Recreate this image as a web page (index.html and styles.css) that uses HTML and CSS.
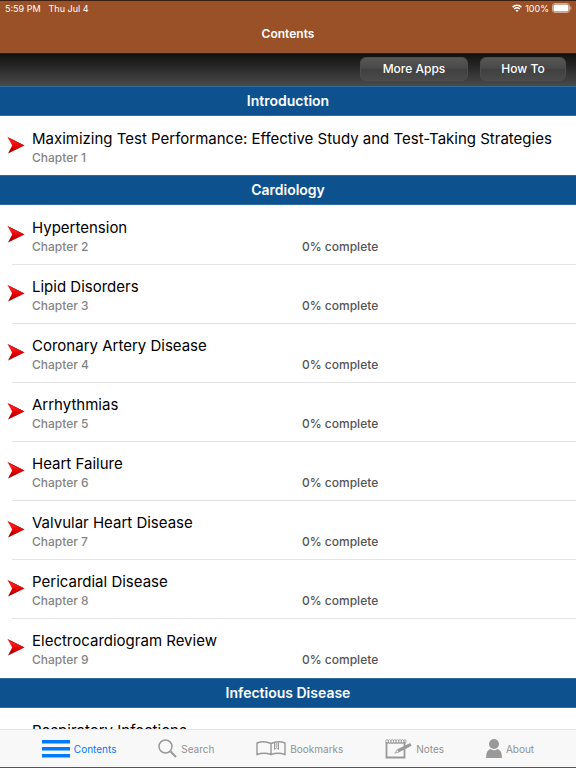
FILE: index.html
```html
<!DOCTYPE html>
<html lang="en">
<head>
  <meta charset="UTF-8" />
  <meta name="viewport" content="width=device-width, initial-scale=1.0" />
  <title>Contents</title>
  <link rel="stylesheet" href="styles.css">
</head>
<body>
  <svg class="sprite" aria-hidden="true">
    <defs>
      <linearGradient id="red" x1="0" y1="0" x2="0" y2="1">
        <stop offset="0.3" stop-color="#ff1a1a" />
        <stop offset="0.55" stop-color="#e60000" />
        <stop offset="1" stop-color="#8c0000" />
      </linearGradient>
      <symbol id="arrow" viewBox="0 0 18 18">
        <path d="M.5 1 17.500 9.500 1 17.500 5.200 9.500Z" fill="url(#red)" />
        <path d="M.5 1 17.500 9.500H16L3 3Z" fill="#a01818" />
      </symbol>
    </defs>
  </svg>

  <header>
    <div class="status">
      <span>5:59 PM</span>
      <span>Thu Jul 4</span>
      <span class="right">
        <svg width="10" height="8" viewBox="0 0 10 8" fill="none" stroke="#fff" stroke-width="1.5">
          <path d="M.6 3.1a6.2 6.2 0 0 1 8.8 0M2.3 5a3.8 3.8 0 0 1 5.4 0" />
          <path d="M5 8 3.5 6.4a2.1 2.1 0 0 1 3 0Z" fill="#fff" stroke="none" />
        </svg>
        <span>100%</span>
        <svg width="20" height="10" viewBox="0 0 20 10">
          <rect x=".5" y=".5" width="17" height="9" rx="2.5" fill="none" stroke="#cfa894" />
          <rect x="1.5" y="1.5" width="15" height="7" rx="1.5" fill="#fff" />
          <path d="M18.7 3.5q1 1.500 0 3Z" fill="#cfa894" stroke="#cfa894" stroke-width=".6" />
        </svg>
      </span>
    </div>
    <h1>Contents</h1>
  </header>

  <div class="toolbar">
    <button class="more">More Apps</button>
    <button class="how">How To</button>
  </div>

  <main>
    <h2>Introduction</h2>
    <ul>
      <li><svg class="arrow"><use href="#arrow" /></svg><h3>Maximizing Test Performance: Effective Study and Test-Taking Strategies</h3><p>Chapter 1</p></li>
    </ul>

    <h2>Cardiology</h2>
    <ul class="long">
      <li><svg class="arrow"><use href="#arrow" /></svg><h3>Hypertension</h3><p>Chapter 2</p><p class="done">0% complete</p></li>
      <li><svg class="arrow"><use href="#arrow" /></svg><h3>Lipid Disorders</h3><p>Chapter 3</p><p class="done">0% complete</p></li>
      <li><svg class="arrow"><use href="#arrow" /></svg><h3>Coronary Artery Disease</h3><p>Chapter 4</p><p class="done">0% complete</p></li>
      <li><svg class="arrow"><use href="#arrow" /></svg><h3>Arrhythmias</h3><p>Chapter 5</p><p class="done">0% complete</p></li>
      <li><svg class="arrow"><use href="#arrow" /></svg><h3>Heart Failure</h3><p>Chapter 6</p><p class="done">0% complete</p></li>
      <li><svg class="arrow"><use href="#arrow" /></svg><h3>Valvular Heart Disease</h3><p>Chapter 7</p><p class="done">0% complete</p></li>
      <li><svg class="arrow"><use href="#arrow" /></svg><h3>Pericardial Disease</h3><p>Chapter 8</p><p class="done">0% complete</p></li>
      <li><svg class="arrow"><use href="#arrow" /></svg><h3>Electrocardiogram Review</h3><p>Chapter 9</p><p class="done">0% complete</p></li>
    </ul>

    <h2>Infectious Disease</h2>
    <ul>
      <li><svg class="arrow"><use href="#arrow" /></svg><h3>Respiratory Infections</h3></li>
    </ul>
  </main>

  <nav>
    <a href="#" class="active">
      <svg width="28" height="18" viewBox="0 0 28 18" fill="#007aff">
        <path d="M0 0h28v3.500H0zM0 7h28v3.500H0zM0 14h28v3.500H0z" />
      </svg>
      Contents
    </a>
    <a href="#">
      <svg width="19" height="19" viewBox="0 0 19 19" fill="none" stroke="#999">
        <circle cx="7.500" cy="7.500" r="6.500" stroke-width="1.500" />
        <path d="M12.300 12.300 18 18" stroke-width="2" />
      </svg>
      Search
    </a>
    <a href="#">
      <svg width="30" height="15" viewBox="0 0 30 15" fill="none" stroke="#999" stroke-width="1.400">
        <path d="M15 2.500Q8 -.8 1 2V13.500Q8 11 15 13.500Q22 11 29 13.500V2Q22 -.8 15 2.500V13.500" />
        <path d="M18.500 1.500V8.500L20.500 6.800 22.500 8.500V1.500" stroke-width="1" />
        <path d="M19.500 1.500h2V6.500L20.500 6 19.500 6.500Z" fill="#bbb" stroke="none" />
      </svg>
      Bookmarks
    </a>
    <a href="#">
      <svg width="27" height="20" viewBox="0 0 27 20" fill="none" stroke="#999">
        <path d="M1.500 3V18.500H19.500V3" stroke-width="1.800" />
        <path d="M1 4h19" stroke-width="1" />
        <g stroke-width=".8">
          <ellipse cx="2" cy="2.500" rx="1.300" ry="2" /><ellipse cx="4.600" cy="2.500" rx="1.300" ry="2" />
          <ellipse cx="7.200" cy="2.500" rx="1.300" ry="2" /><ellipse cx="9.800" cy="2.500" rx="1.300" ry="2" />
          <ellipse cx="12.400" cy="2.500" rx="1.300" ry="2" /><ellipse cx="15" cy="2.500" rx="1.300" ry="2" />
          <ellipse cx="17.600" cy="2.500" rx="1.300" ry="2" /><ellipse cx="20" cy="2.500" rx="1" ry="2" />
        </g>
        <path d="M12.300 10.300 25.200 4 26.600 6.800 14 13.200Z" fill="#999" stroke="none" />
        <path d="M12.300 10.500 9.800 14.200 14 13Z" stroke-width=".8" />
      </svg>
      Notes
    </a>
    <a href="#">
      <svg width="16" height="19" viewBox="0 0 16 19" fill="#999">
        <circle cx="8" cy="5" r="5" />
        <path d="M0 19Q0 11 4.500 10Q8 12.500 11.500 10Q16 11 16 19Z" />
      </svg>
      About
    </a>
  </nav>
</body>
</html>
```

FILE: styles.css
```css
* {
  box-sizing: border-box;
  margin: 0;
  padding: 0;
}
body {
  display: flex;
  flex-direction: column;
  height: 100vh;
  font-family: Inter, "Liberation Sans", sans-serif;
  color: #000;
  background: #fff;
  border-bottom: 1px solid #555;
}
svg {
  flex: none;
}
.sprite {
  width: 0;
  height: 0;
  position: absolute;
}
header {
  color: #fff;
  background: #9b5128;
  border-top: 1px solid #3c1e10;
  border-bottom: 1px solid #2b1a10;
  padding-bottom: 10px;
}
.status {
  display: flex;
  align-items: center;
  gap: 8px;
  height: 14px;
  padding: 0 4px 0 5px;
  font-size: 9px;
}
.right {
  display: flex;
  align-items: center;
  gap: 3px;
  margin-left: auto;
}
h1 {
  margin-top: 10px;
  font-size: 12px;
  line-height: 18px;
  font-weight: 600;
  text-align: center;
}
.toolbar {
  display: flex;
  justify-content: flex-end;
  gap: 12px;
  padding: 3px 10px 5px;
  background: linear-gradient(#111, #4a4a4a);
}
button {
  height: 24px;
  border: 1px solid #4d4d4d;
  border-radius: 6px;
  background: linear-gradient(#575757, #484848 50%, #404040 50%, #4a4a4a);
  color: #fff;
  font: 500 12px/22px Inter, "Liberation Sans", sans-serif;
}
.more {
  width: 108px;
}
.how {
  width: 86px;
}
main {
  flex: 1;
  min-height: 0;
  overflow-y: auto;
  scrollbar-width: none;
}
h2 {
  height: 30px;
  background: #0d528e;
  border-top: 1px solid #2f6ca0;
  border-bottom: 1px solid #2f6ca0;
  color: #fff;
  font-size: 14px;
  line-height: 28px;
  font-weight: 600;
  text-align: center;
}
ul {
  list-style: none;
}
.long {
  padding-bottom: 1px;
}
li {
  display: grid;
  grid-template-columns: 25px 270px 1fr;
  grid-template-rows: 22px 16px;
  align-content: start;
  height: 59px;
  padding: 12px 0 0 7px;
}
li + li {
  background: linear-gradient(#e4e4e6, #e4e4e6) 12px 0 / 100% 1px no-repeat;
}
.arrow {
  grid-row: 1 / 3;
  width: 18px;
  height: 18px;
  margin-top: 8px;
}
h3 {
  grid-column: 2 / 4;
  font-size: 15px;
  line-height: 22px;
  font-weight: 400;
  white-space: nowrap;
}
p {
  color: #858585;
  font-size: 12px;
  line-height: 16px;
  font-weight: 500;
}
.done {
  color: #555;
}
nav {
  display: flex;
  justify-content: space-evenly;
  height: 38px;
  background: #f8f8f8;
  border-top: 1px solid #e6e6e6;
}
nav a {
  display: flex;
  align-items: center;
  gap: 4px;
  color: #929292;
  font-size: 10px;
  text-decoration: none;
}
nav .active {
  color: #007aff;
}
```
